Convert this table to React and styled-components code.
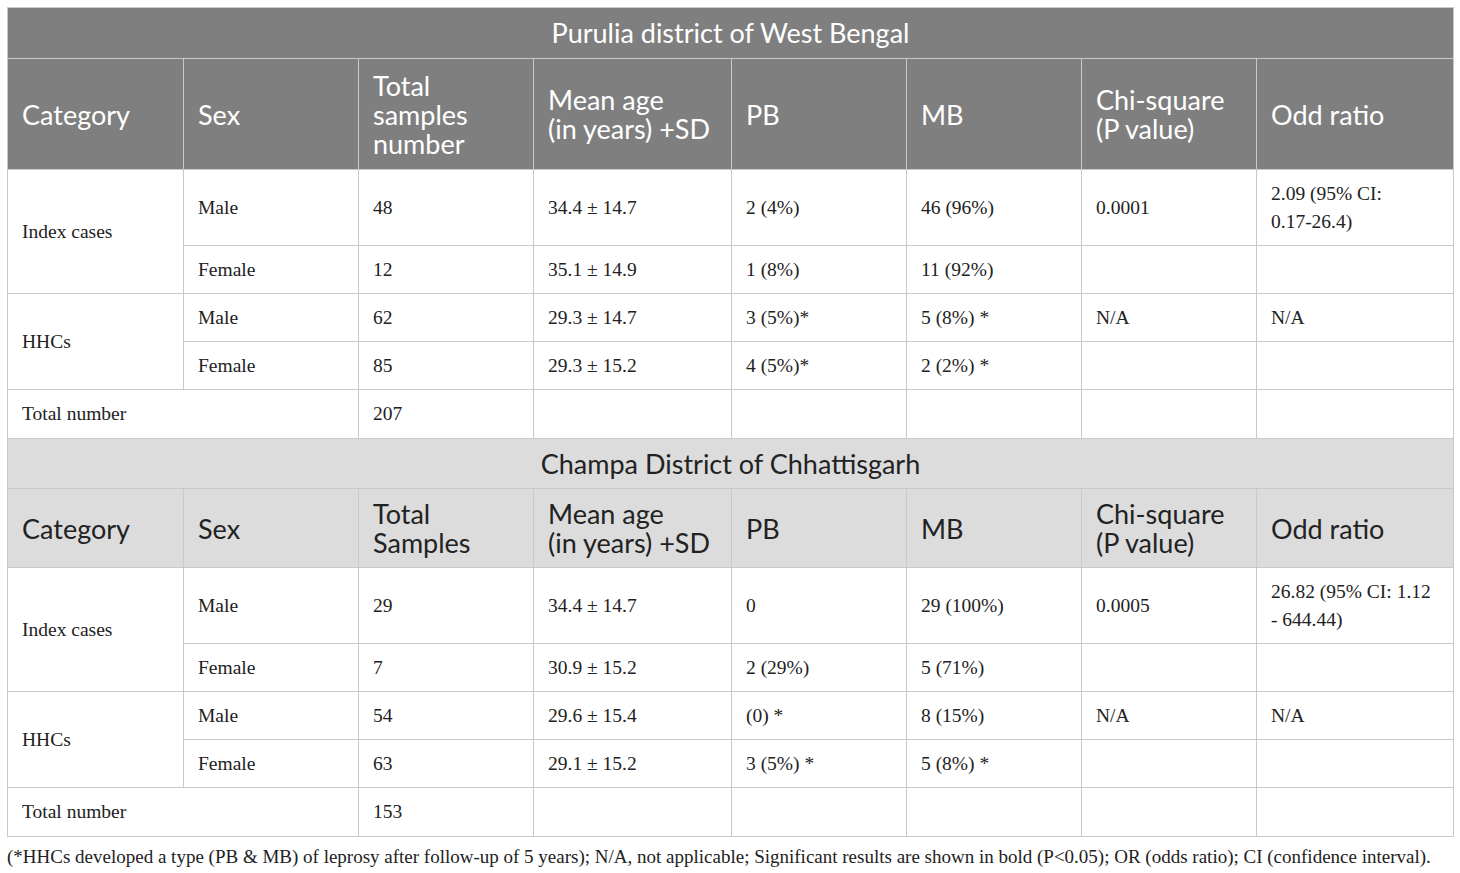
import React from "react";
import styled, { createGlobalStyle } from "styled-components";

const Global = createGlobalStyle`
  html, body { margin: 0; padding: 0; background: #ffffff; }
`;

const Page = styled.div`
  padding: 7px 7px 0 7px;
  width: 1446px;
`;

const Table = styled.table`
  width: 1446px;
  border-collapse: collapse;
  table-layout: fixed;
  border: 1px solid #c9c9c9;
`;

const TitleCell = styled.th`
  height: ${(p) => p.$h}px;
  padding: 0;
  text-align: center;
  vertical-align: middle;
  font-family: Lato, "Liberation Sans", sans-serif;
  font-weight: 400;
  font-size: 27px;
  line-height: 30px;
  color: ${(p) => (p.$dark ? "#ffffff" : "#222222")};
  background: ${(p) => (p.$dark ? "#7f7f7f" : "#dcdcdc")};
  border: 1px solid #c9c9c9;
`;

const HeadCell = styled.th`
  height: ${(p) => p.$h}px;
  padding: 0 8px 0 14px;
  text-align: left;
  vertical-align: middle;
  font-family: Lato, "Liberation Sans", sans-serif;
  font-weight: 400;
  font-size: 27px;
  line-height: 29px;
  color: ${(p) => (p.$dark ? "#ffffff" : "#222222")};
  background: ${(p) => (p.$dark ? "#7f7f7f" : "#dcdcdc")};
  border: 1px solid #c9c9c9;
`;

const Row = styled.tr`
  height: ${(p) => p.$h}px;
`;

const Cell = styled.td`
  padding: 0 8px 0 14px;
  text-align: left;
  vertical-align: middle;
  font-family: "Liberation Serif", "Times New Roman", serif;
  font-size: 19.5px;
  line-height: 28px;
  color: #222222;
  border: 1px solid #c9c9c9;
`;

const Note = styled.p`
  margin: 9px 0 0 0;
  font-family: "Liberation Serif", "Times New Roman", serif;
  font-size: 19px;
  line-height: 22px;
  color: #222222;
  white-space: nowrap;
`;

const widths = [176, 175, 175, 198, 175, 175, 175, 197];

function Section({ title, dark, titleH, headers, headH, rows, total }) {
  return (
    <>
      <tr>
        <TitleCell colSpan={8} $dark={dark} $h={titleH}>
          {title}
        </TitleCell>
      </tr>
      <tr>
        {headers.map((h, i) => (
          <HeadCell key={i} $dark={dark} $h={headH}>
            {h}
          </HeadCell>
        ))}
      </tr>
      {rows.map((g, gi) => (
        <React.Fragment key={gi}>
          <Row $h={g.h}>
            <Cell rowSpan={2}>{g.cat}</Cell>
            {g.male.map((v, i) => (
              <Cell key={i}>{v}</Cell>
            ))}
          </Row>
          <Row $h={48}>
            {g.female.map((v, i) => (
              <Cell key={i}>{v}</Cell>
            ))}
          </Row>
        </React.Fragment>
      ))}
      <Row $h={49}>
        <Cell colSpan={2}>Total number</Cell>
        <Cell>{total}</Cell>
        <Cell />
        <Cell />
        <Cell />
        <Cell />
        <Cell />
      </Row>
    </>
  );
}

export default function App() {
  const h1 = [
    "Category",
    "Sex",
    <>Total<br />samples<br />number</>,
    <>Mean age<br />(in years) +SD</>,
    "PB",
    "MB",
    <>Chi-square<br />(P value)</>,
    "Odd ratio",
  ];
  const h2 = [
    "Category",
    "Sex",
    <>Total<br />Samples</>,
    <>Mean age<br />(in years) +SD</>,
    "PB",
    "MB",
    <>Chi-square<br />(P value)</>,
    "Odd ratio",
  ];
  const rows1 = [
    {
      cat: "Index cases",
      h: 76,
      male: ["Male", "48", "34.4 ± 14.7", "2 (4%)", "46 (96%)", "0.0001", <>2.09 (95% CI:<br />0.17-26.4)</>],
      female: ["Female", "12", "35.1 ± 14.9", "1 (8%)", "11 (92%)", "", ""],
    },
    {
      cat: "HHCs",
      h: 48,
      male: ["Male", "62", "29.3 ± 14.7", "3 (5%)*", "5 (8%) *", "N/A", "N/A"],
      female: ["Female", "85", "29.3 ± 15.2", "4 (5%)*", "2 (2%) *", "", ""],
    },
  ];
  const rows2 = [
    {
      cat: "Index cases",
      h: 76,
      male: ["Male", "29", "34.4 ± 14.7", "0", "29 (100%)", "0.0005", <>26.82 (95% CI: 1.12<br />- 644.44)</>],
      female: ["Female", "7", "30.9 ± 15.2", "2 (29%)", "5 (71%)", "", ""],
    },
    {
      cat: "HHCs",
      h: 48,
      male: ["Male", "54", "29.6 ± 15.4", "(0) *", "8 (15%)", "N/A", "N/A"],
      female: ["Female", "63", "29.1 ± 15.2", "3 (5%) *", "5 (8%) *", "", ""],
    },
  ];
  return (
    <Page>
      <Global />
      <Table>
        <colgroup>
          {widths.map((w, i) => (
            <col key={i} style={{ width: w }} />
          ))}
        </colgroup>
        <tbody>
          <Section title="Purulia district of West Bengal" dark titleH={50} headers={h1} headH={110} rows={rows1} total="207" />
          <Section title="Champa District of Chhattisgarh" titleH={49} headers={h2} headH={78} rows={rows2} total="153" />
        </tbody>
      </Table>
      <Note>
        (*HHCs developed a type (PB &amp; MB) of leprosy after follow-up of 5 years); N/A, not applicable; Significant results are shown in bold (P&lt;0.05); OR (odds ratio); CI (confidence interval).
      </Note>
    </Page>
  );
}
